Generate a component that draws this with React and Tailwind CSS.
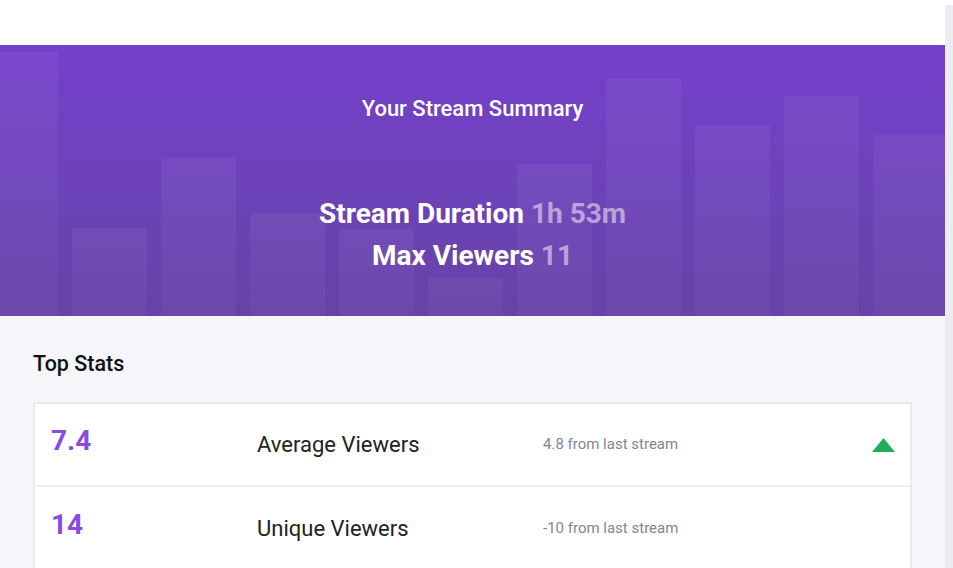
import React from 'react';

const bars = [264, 88, 159, 103, 87, 38, 152, 238, 191, 220, 181];

const stats = [
    { value: '7.4', label: 'Average Viewers', delta: '4.8 from last stream', up: true },
    { value: '14', label: 'Unique Viewers', delta: '-10 from last stream', up: false },
];

const UpArrow = () => (
    <svg width="23" height="14" viewBox="0 0 23 14">
        <polygon points="11.5,0 23,14 0,14" fill="#1fae5b" />
    </svg>
);

const StreamSummary = () => {
    return (
        <div className="relative h-[271px] overflow-hidden bg-gradient-to-b from-[#7540cd] to-[#6643a7]">
            {/* faded viewer chart behind the headline */}
            <div className="absolute inset-0 flex items-end gap-[14px] -ml-[17px]">
                {bars.map((h, i) => (
                    <div
                        key={i}
                        className="w-[75px] shrink-0 bg-gradient-to-b from-white/[0.05] to-white/[0.03]"
                        style={{ height: h }}
                    />
                ))}
            </div>
            <div className="relative flex flex-col items-center text-white">
                <h2 className="mt-[50px] text-[22px] font-medium leading-[28px]">Your Stream Summary</h2>
                <div className="mt-[70px] text-[28px] font-bold leading-[42px] text-center">
                    <p>Stream Duration <span className="text-white/50">1h 53m</span></p>
                    <p>Max Viewers <span className="text-white/50">11</span></p>
                </div>
            </div>
        </div>
    );
};

const StatRow = ({ stat, last }) => (
    <div className={`flex items-center h-[83px] pl-[16px] pr-[15px] ${last ? '' : 'border-b-2 border-[#eceef1]'}`}>
        <span className="w-[206px] text-[28px] font-bold text-[#8a4ae6] -mt-2">{stat.value}</span>
        <span className="w-[286px] text-[22px] text-[#222] -mt-px">{stat.label}</span>
        <span className="flex-1 text-[15px] text-[#85858f]">{stat.delta}</span>
        {stat.up && <UpArrow />}
    </div>
);

export default function App() {
    return (
        <div className="flex min-h-[568px] bg-[#f4f6f9]" style={{ fontFamily: 'Roboto, "Noto Sans", sans-serif' }}>
            <div className="w-[945px] shrink-0">
                <div className="h-[45px] bg-white" />
                <StreamSummary />
                <div className="px-[33px]">
                    <h3 className="mt-[33px] text-[21.5px] font-medium text-[#111] leading-[30px]">Top Stats</h3>
                    <div className="mt-[23px] w-[879px] border-2 border-[#e8eaed] bg-white">
                        {stats.map((s, i) => (
                            <StatRow key={s.label} stat={s} last={i === stats.length - 1} />
                        ))}
                    </div>
                </div>
            </div>
            <div className="flex-1 flex flex-col">
                <div className="h-[5px] bg-white" />
                <div className="flex-1 bg-[#ebedf0]" />
            </div>
        </div>
    );
}
